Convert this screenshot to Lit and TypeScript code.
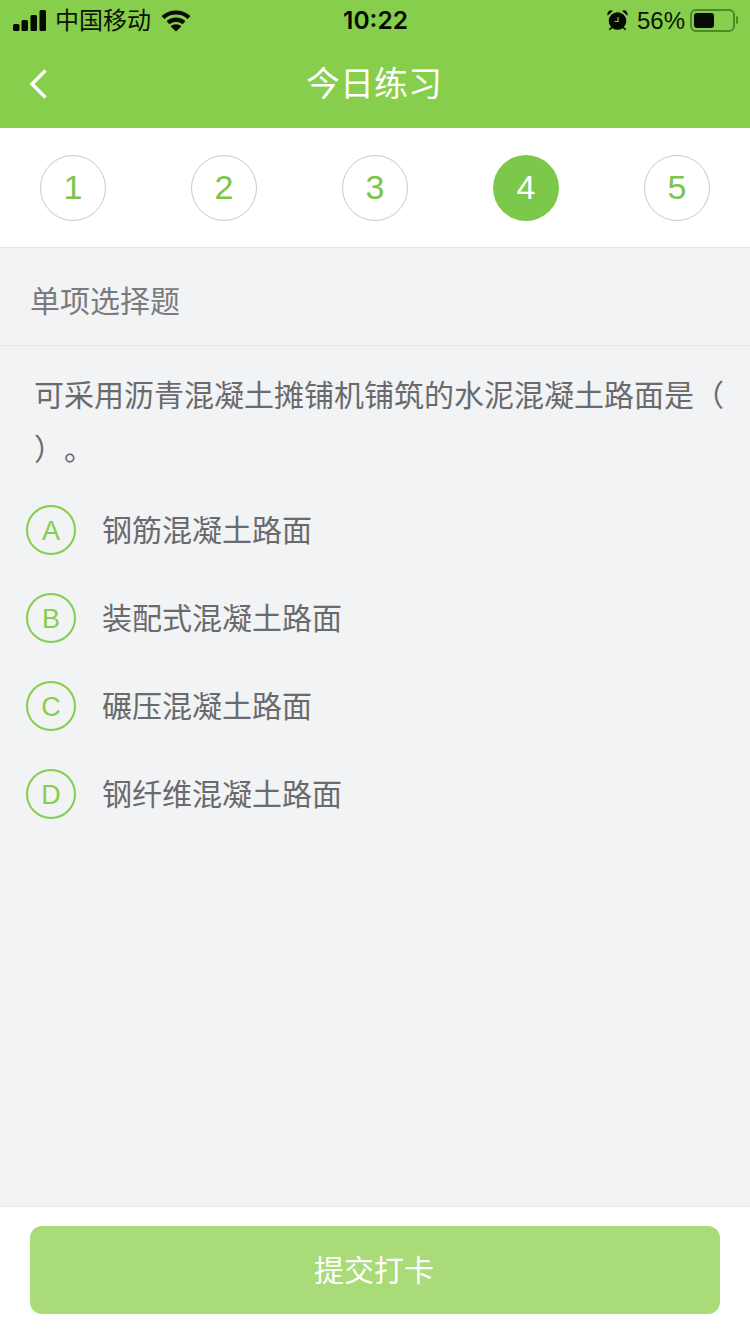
import { LitElement, css, html, svg } from "lit";
import { customElement } from "lit/decorators.js";

const STEPS = ["1", "2", "3", "4", "5"];
const ACTIVE_STEP = "4";
const OPTIONS = [
  { key: "A", text: "钢筋混凝土路面" },
  { key: "B", text: "装配式混凝土路面" },
  { key: "C", text: "碾压混凝土路面" },
  { key: "D", text: "钢纤维混凝土路面" },
];

const signalIcon = svg`
  <rect x="0" y="14" width="6.500" height="7" rx="1.500" />
  <rect x="8.500" y="10" width="6.500" height="11" rx="1.500" />
  <rect x="17.500" y="5" width="6.500" height="16" rx="1.500" />
  <rect x="26.500" y="0" width="6.500" height="21" rx="1.500" />
`;

const wifiIcon = svg`
  <path d="M2 8.500C9 1.800 21 1.800 28 8.500" fill="none" stroke="#050a02" stroke-width="4.200" />
  <path d="M7 13.800C11.500 9.600 18.500 9.600 23 13.800" fill="none" stroke="#050a02" stroke-width="4.200" />
  <path d="M15 15.200c2.200 0 4 .8 5.400 2.100L15 22.500l-5.400-5.200c1.400-1.300 3.200-2.100 5.400-2.100z" />
`;

const alarmIcon = svg`
  <circle cx="10.500" cy="12" r="8.800" />
  <path d="M.6 6.800 5.800 1.900C3.200-.2-.6 2.700.6 6.800zM20.400 6.800 15.200 1.900c2.600-2.100 6.400.8 5.200 4.900zM4.300 17.800 1.800 20.300l1.100 1 2.500-2.400zM16.700 17.800l2.500 2.500-1.100 1-2.500-2.400z" />
  <path d="M11 8v4.500H7.500" fill="none" stroke="#86ce4b" stroke-width="1.200" />
`;

@customElement("app-root")
export class AppRoot extends LitElement {
  static styles = css`
    :host {
      display: flex;
      flex-direction: column;
      width: 750px;
      height: 1334px;
      overflow: hidden;
      background: #f2f3f5;
      font-family: "Noto Sans CJK SC", sans-serif;
      color: #6a6a6c;
    }

    .top {
      background: #86ce4b;
    }

    .status {
      display: grid;
      grid-template-columns: 1fr auto 1fr;
      align-items: center;
      height: 40px;
      padding: 0 12px 0 13px;
      color: #0b1405;
    }

    .status-left,
    .status-right {
      display: flex;
      align-items: center;
    }

    .status-right {
      justify-content: flex-end;
    }

    .status svg {
      display: block;
      fill: #050a02;
    }

    .carrier {
      margin: 0 10px 0 9px;
      padding-bottom: 2px;
      font-size: 24px;
      line-height: 38px;
    }

    .time {
      padding-top: 1px;
      font-family: "Inter", sans-serif;
      font-size: 24.500px;
      font-weight: 600;
      line-height: 39px;
      color: #050a02;
    }

    .percent {
      margin: 0 5px 0 9px;
      padding-top: 1px;
      font-family: "Liberation Sans", sans-serif;
      font-size: 24px;
      line-height: 39px;
    }

    .battery {
      display: flex;
      align-items: center;
      box-sizing: border-box;
      width: 45px;
      height: 23px;
      padding: 2px;
      border: 2px solid #4f8a25;
      border-radius: 6px;
    }

    .battery-level {
      width: 20px;
      height: 15px;
      border-radius: 3px;
      background: #050a02;
    }

    .battery-cap {
      width: 2px;
      height: 8px;
      margin-left: 1px;
      border-radius: 0 2px 2px 0;
      background: #4f8a25;
    }

    .nav {
      position: relative;
      display: flex;
      align-items: center;
      justify-content: center;
      height: 88px;
    }

    .back {
      position: absolute;
      left: 28px;
      top: 28px;
      display: block;
    }

    .title {
      padding: 0 2px 4px 0;
      font-size: 34px;
      line-height: 84px;
      color: #fff;
    }

    .steps {
      display: flex;
      justify-content: space-between;
      align-items: center;
      height: 119px;
      padding: 0 40px;
      background: #fff;
      border-bottom: 1px solid #e4e5e7;
    }

    .step {
      display: flex;
      align-items: center;
      justify-content: center;
      box-sizing: border-box;
      width: 66px;
      height: 66px;
      border: 1px solid #c9c9c9;
      border-radius: 50%;
      font-family: "Liberation Sans", sans-serif;
      font-size: 34px;
      color: #7cc44a;
    }

    .step.active {
      border: none;
      background: #7cc84a;
      color: #fff;
    }

    .section {
      height: 97px;
      padding-left: 30px;
      font-size: 30px;
      line-height: 103px;
      color: #7b7b7d;
      border-bottom: 1px solid #e6e7e9;
    }

    .question {
      margin: 0;
      padding: 20px 20px 0 34px;
      font-size: 30px;
      line-height: 54px;
      text-spacing-trim: space-all;
      color: #6a6a6c;
    }

    .options {
      display: flex;
      flex-direction: column;
      gap: 38px;
      margin-top: 31px;
      padding-left: 26px;
    }

    .option {
      display: flex;
      align-items: center;
      gap: 26px;
      height: 50px;
      font-size: 30px;
      color: #6a6a6c;
    }

    .option-text {
      padding-bottom: 5px;
    }

    .key {
      display: flex;
      align-items: center;
      justify-content: center;
      box-sizing: border-box;
      width: 50px;
      height: 50px;
      padding-top: 2px;
      border: 2px solid #86ce4b;
      border-radius: 50%;
      font-family: "Liberation Sans", sans-serif;
      font-size: 27px;
      color: #86ce4b;
    }

    .footer {
      margin-top: auto;
      box-sizing: border-box;
      height: 128px;
      padding: 19px 30px 0;
      background: #fff;
      border-top: 1px solid #e6e7e9;
    }

    .submit {
      display: block;
      width: 690px;
      height: 88px;
      padding: 0 2px 4px 0;
      border: none;
      border-radius: 12px;
      background: #a9dc78;
      font-family: inherit;
      font-size: 30px;
      color: #fff;
    }
  `;

  render() {
    return html`
      <div class="top">
        <div class="status">
          <div class="status-left">
            <svg width="33" height="21" viewBox="0 0 33 21">${signalIcon}</svg>
            <span class="carrier">中国移动</span>
            <svg width="30" height="23" viewBox="0 0 30 23">${wifiIcon}</svg>
          </div>
          <span class="time">10:22</span>
          <div class="status-right">
            <svg width="21" height="22" viewBox="0 0 21 22">${alarmIcon}</svg>
            <span class="percent">56%</span>
            <div class="battery"><div class="battery-level"></div></div>
            <div class="battery-cap"></div>
          </div>
        </div>
        <div class="nav">
          <svg class="back" width="20" height="32" viewBox="0 0 20 32" fill="none" stroke="#fff" stroke-width="3.500">
            <path d="M17.500 2.500 4 16l13.500 13.500" />
          </svg>
          <span class="title">今日练习</span>
        </div>
      </div>

      <div class="steps">
        ${STEPS.map(
          (step) => html`<div class="step ${step === ACTIVE_STEP ? "active" : ""}">${step}</div>`
        )}
      </div>

      <div class="section">单项选择题</div>
      <p class="question">可采用沥青混凝土摊铺机铺筑的水泥混凝土路面是（ ）。</p>

      <div class="options">
        ${OPTIONS.map(
          (option) => html`
            <div class="option">
              <span class="key">${option.key}</span>
              <span class="option-text">${option.text}</span>
            </div>
          `
        )}
      </div>

      <div class="footer">
        <button class="submit">提交打卡</button>
      </div>
    `;
  }
}
